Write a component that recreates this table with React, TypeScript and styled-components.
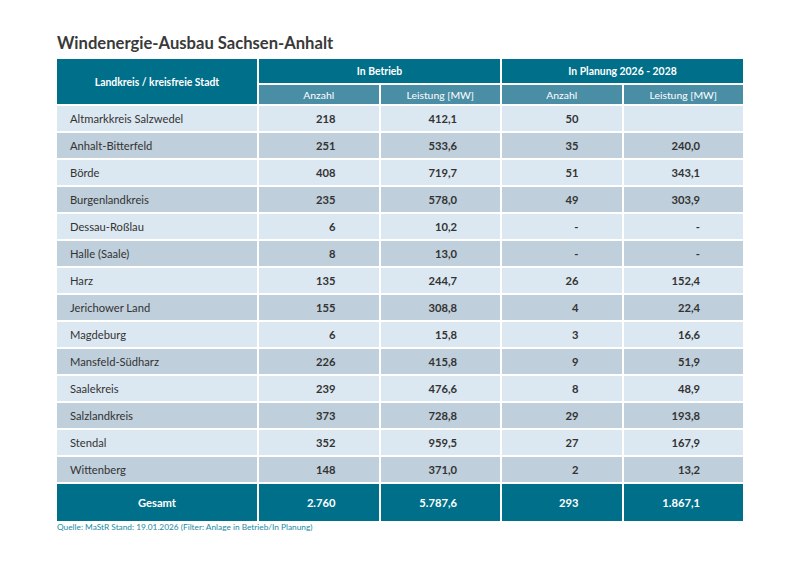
import React from "react";
import styled, { createGlobalStyle } from "styled-components";

const Global = createGlobalStyle`
  html, body { margin: 0; padding: 0; background: #fff; }
  body { font-family: Lato, "Open Sans", sans-serif; }
`;

const Page = styled.div`
  width: 800px;
  height: 566px;
  box-sizing: border-box;
  padding: 32px 55px 0 55px;
  background: #fff;
`;

const Title = styled.h1`
  margin: 0 0 3px 2px;
  font-family: Lato, sans-serif;
  font-weight: 700;
  font-size: 16.6px;
  line-height: 22px;
  color: #3a3a3a;
`;

const Table = styled.table`
  border-collapse: separate;
  border-spacing: 2px;
  width: 690px;
  table-layout: fixed;
  font-family: Lato, sans-serif;
  font-size: 11.2px;
  color: #333;
`;

const HeadCell = styled.th<{ $sub?: boolean }>`
  background: ${(p) => (p.$sub ? "#4a8ea6" : "#006f8a")};
  color: #fff;
  font-size: 10.4px;
  font-weight: ${(p) => (p.$sub ? 400 : 700)};
  text-align: center;
  padding: 0;
  height: ${(p) => (p.$sub ? "19px" : "24px")};
`;

const Row = styled.tr<{ $alt: boolean }>`
  background: ${(p) => (p.$alt ? "#bfcfdb" : "#dce8f1")};
`;

const NameCell = styled.td`
  height: 25px;
  padding: 0 0 0 13px;
  text-align: left;
`;

const NumCell = styled.td`
  height: 25px;
  padding: 0 43px 0 0;
  text-align: right;
  font-weight: 700;
`;

const TotalRow = styled.tr`
  background: #006f8a;
  color: #fff;
  font-weight: 700;
`;

const TotalLabel = styled.td`
  height: 35px;
  text-align: center;
`;

const TotalNum = styled.td`
  height: 35px;
  padding: 0 43px 0 0;
  text-align: right;
`;

const Source = styled.div`
  margin: -1px 0 0 2px;
  font-family: Lato, sans-serif;
  font-size: 8.3px;
  color: #1a8aa5;
`;

const rows: [string, string, string, string, string][] = [
  ["Altmarkkreis Salzwedel", "218", "412,1", "50", ""],
  ["Anhalt-Bitterfeld", "251", "533,6", "35", "240,0"],
  ["Börde", "408", "719,7", "51", "343,1"],
  ["Burgenlandkreis", "235", "578,0", "49", "303,9"],
  ["Dessau-Roßlau", "6", "10,2", "-", "-"],
  ["Halle (Saale)", "8", "13,0", "-", "-"],
  ["Harz", "135", "244,7", "26", "152,4"],
  ["Jerichower Land", "155", "308,8", "4", "22,4"],
  ["Magdeburg", "6", "15,8", "3", "16,6"],
  ["Mansfeld-Südharz", "226", "415,8", "9", "51,9"],
  ["Saalekreis", "239", "476,6", "8", "48,9"],
  ["Salzlandkreis", "373", "728,8", "29", "193,8"],
  ["Stendal", "352", "959,5", "27", "167,9"],
  ["Wittenberg", "148", "371,0", "2", "13,2"],
];

export default function App() {
  return (
    <Page>
      <Global />
      <Title>Windenergie-Ausbau Sachsen-Anhalt</Title>
      <Table>
        <colgroup>
          <col style={{ width: 200 }} />
          <col />
          <col />
          <col />
          <col />
        </colgroup>
        <thead>
          <tr>
            <HeadCell rowSpan={2}>Landkreis / kreisfreie Stadt</HeadCell>
            <HeadCell colSpan={2}>In Betrieb</HeadCell>
            <HeadCell colSpan={2}>In Planung 2026 - 2028</HeadCell>
          </tr>
          <tr>
            <HeadCell $sub>Anzahl</HeadCell>
            <HeadCell $sub>Leistung [MW]</HeadCell>
            <HeadCell $sub>Anzahl</HeadCell>
            <HeadCell $sub>Leistung [MW]</HeadCell>
          </tr>
        </thead>
        <tbody>
          {rows.map((r, i) => (
            <Row key={r[0]} $alt={i % 2 === 1}>
              <NameCell>{r[0]}</NameCell>
              <NumCell>{r[1]}</NumCell>
              <NumCell>{r[2]}</NumCell>
              <NumCell>{r[3]}</NumCell>
              <NumCell>{r[4]}</NumCell>
            </Row>
          ))}
          <TotalRow>
            <TotalLabel>Gesamt</TotalLabel>
            <TotalNum>2.760</TotalNum>
            <TotalNum>5.787,6</TotalNum>
            <TotalNum>293</TotalNum>
            <TotalNum>1.867,1</TotalNum>
          </TotalRow>
        </tbody>
      </Table>
      <Source>Quelle: MaStR Stand: 19.01.2026 (Filter: Anlage in Betrieb/In Planung)</Source>
    </Page>
  );
}
